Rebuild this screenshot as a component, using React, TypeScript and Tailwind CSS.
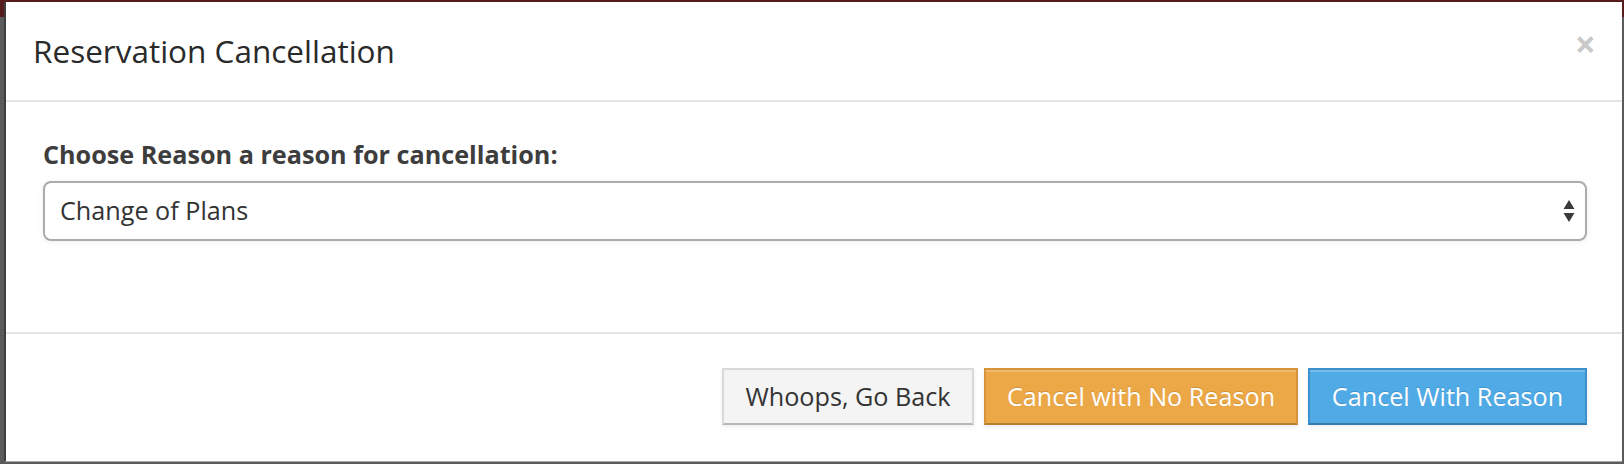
export default function App() {
  return (
    <div className="h-[464px] w-full bg-[linear-gradient(to_bottom,#571b1b_0,#571b1b_17px,#5b5b5b_17px)] pt-[2px] pb-[2px] pl-[4px] pr-[2px] font-['Open_Sans',sans-serif]">
      {/* Modal */}
      <div className="flex h-full flex-col border-l-2 border-b border-l-[#3e3e3e] border-b-[#a8a8a8] bg-white">
        {/* Header */}
        <header className="flex h-[100px] shrink-0 items-start justify-between border-b-2 border-[#e5e5e5] pl-[27px] pr-[26px] pt-[26px]">
          <h4 className="text-[31.5px] leading-[45px] text-[#2a2a2a]">
            Reservation Cancellation
          </h4>
          <button className="mt-[-3px] text-[37px] font-bold leading-none text-[#c9c9c9]">
            ×
          </button>
        </header>

        {/* Body */}
        <section className="h-[230px] shrink-0 pl-[37px] pr-[35px] pt-[35px]">
          <label className="mb-[9px] block text-[25.2px] font-bold leading-[35px] text-[#3d3d3d]">
            Choose Reason a reason for cancellation:
          </label>
          <div className="flex h-[60px] items-center justify-between rounded-[8px] border-2 border-[#ababab] bg-white pl-[15px] pr-[10px] text-[25.2px] text-[#333] shadow-[0_1px_6px_rgba(0,0,0,0.07)]">
            <span>Change of Plans</span>
            <svg width="12" height="24" viewBox="0 0 12 24" fill="#3a3a3a">
              <path d="M6 1 L11.5 10 L0.5 10 Z" />
              <path d="M0.5 14 L11.5 14 L6 23 Z" />
            </svg>
          </div>
        </section>

        {/* Footer */}
        <footer className="flex flex-1 justify-end gap-[10px] border-t-2 border-[#e5e5e5] pr-[35px] pt-[34px]">
          <button className="h-[57px] w-[252px] border-2 border-[#d9d9d9] border-b-[#b9b9b9] bg-[#f4f4f4] text-[25.2px] text-[#333] shadow-[0_2px_4px_rgba(0,0,0,0.07)]">
            Whoops, Go Back
          </button>
          <button className="h-[57px] w-[314px] border-2 border-[#d8933a] border-b-[#b67e30] bg-[#eca847] text-[25.2px] text-white shadow-[inset_0_2px_0_rgba(255,255,255,0.22),0_2px_4px_rgba(0,0,0,0.07)] [text-shadow:0_-1px_0_rgba(0,0,0,0.15)]">
            Cancel with No Reason
          </button>
          <button className="h-[57px] w-[279px] border-2 border-[#3f8fcc] border-b-[#3679ad] bg-[#4faae6] text-[25.2px] text-white shadow-[inset_0_2px_0_rgba(255,255,255,0.22),0_2px_4px_rgba(0,0,0,0.07)] [text-shadow:0_-1px_0_rgba(0,0,0,0.15)]">
            Cancel With Reason
          </button>
        </footer>
      </div>
    </div>
  );
}
